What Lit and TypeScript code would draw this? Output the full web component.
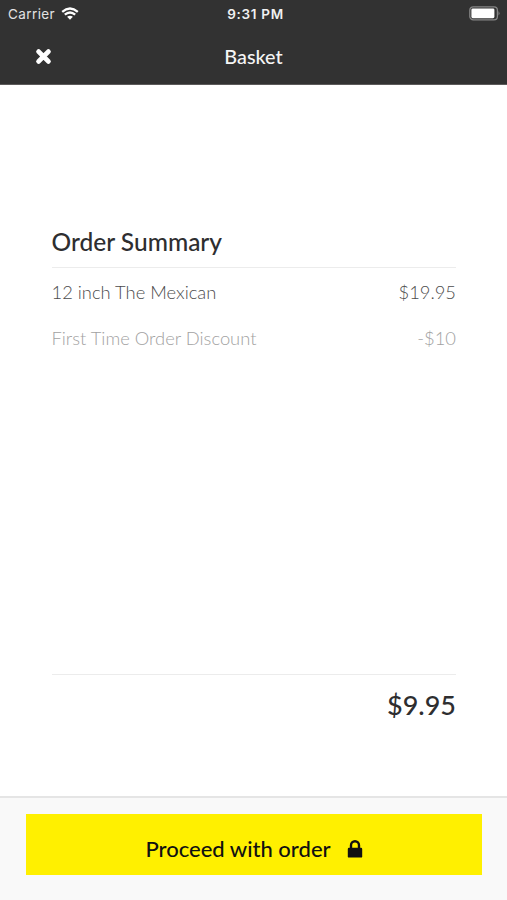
import { LitElement, html, css } from "lit";
import { customElement } from "lit/decorators.js";

@customElement("app-root")
export class AppRoot extends LitElement {
  static styles = css`
    :host { display: flex; flex-direction: column; height: 900px; background: #fff; color: #2e2e30; font-family: Lato, sans-serif; }
    * { box-sizing: border-box; }
    header { height: 85px; background: #323232; color: #fff; flex: none; border-bottom: 1px solid #5c5a5a; }
    .status { height: 28px; display: grid; grid-template-columns: 1fr auto 1fr; align-items: center; padding: 0 7px 0 8px; font: 13.5px/28px Inter, sans-serif; }
    .carrier { display: flex; align-items: center; gap: 6px; letter-spacing: .4px; color: #e2e2e2; }
    .carrier svg { margin-top: -2px; }
    .time { font-weight: 600; font-size: 13.5px; letter-spacing: .7px; color: #f0f0f0; padding-left: 3px; }
    .battery { justify-self: end; display: block; margin-top: -2px; }
    .nav { height: 56px; display: grid; grid-template-columns: 1fr auto 1fr; align-items: center; }
    .close { margin: 1px 0 0 35px; display: block; }
    .title { font-size: 19.8px; font-weight: 500; color: #f5f5f5; margin-top: -1px; }
    main { flex: 1; display: flex; flex-direction: column; padding: 143px 51px 0 51.5px; }
    h1 { margin: 0; font-size: 24.5px; line-height: 28px; height: 40px; font-weight: 500; border-bottom: 1px solid #ececec; }
    .row { display: flex; justify-content: space-between; font-size: 18.35px; font-weight: 300; line-height: 48px; height: 46px; color: #4c4c4c; }
    .discount { color: #a2a2a2; line-height: 49px; }
    .total { margin-top: auto; height: 122px; border-top: 1px solid #ececec; text-align: right; font-size: 27px; line-height: 59px; font-weight: 500; }
    footer { height: 104px; flex: none; background: #f9f9f9; border-top: 2px solid #e5e5e5; padding: 16px 25.5px; }
    button { width: 100%; height: 61px; border: 0; padding: 7px 0 0 1px; background: #fff000; color: #111; font: 500 22px Lato, sans-serif; display: flex; align-items: center; justify-content: center; gap: 16px; }
    button svg { margin-top: 2px; }
  `;
  render() {
    return html`
      <header>
        <div class="status"><span class="carrier">Carrier
          <svg width="18" height="13" viewBox="0 0 18 13" fill="none" stroke="#fff" stroke-width="2.3"><path d="M1.2 4.8Q9-1.8 16.8 4.8M3.8 7.7Q9 3.3 14.2 7.7"/><path d="M6.1 9.8Q9 7.6 11.9 9.8L9 12.8Z" fill="#fff" stroke="none"/></svg></span>
          <span class="time">9:31 PM</span>
          <svg class="battery" width="31" height="15" viewBox="0 0 31 15"><rect x=".8" y=".8" width="27.6" height="13" rx="3.4" fill="none" stroke="#858585" stroke-width="1.3"/><rect x="2.4" y="2.4" width="23" height="9.8" rx="1.4" fill="#fff"/><path d="M29.5 5q2 2.3 0 4.6z" fill="#858585"/></svg>
        </div>
        <div class="nav"><svg class="close" width="17" height="17" viewBox="0 0 16 16"><path d="M3.4 3.4L12.6 12.6M12.6 3.4L3.4 12.6" stroke="#fff" stroke-width="4.6" stroke-linecap="round"/></svg><span class="title">Basket</span></div>
      </header>
      <main>
        <h1>Order Summary</h1>
        <div class="row"><span>12 inch The Mexican</span><span>$19.95</span></div>
        <div class="row discount"><span>First Time Order Discount</span><span>-$10</span></div>
        <div class="total">$9.95</div>
      </main>
      <footer><button><span>Proceed with order</span><svg width="16" height="18" viewBox="0 0 16 18"><path d="M4 8V5.2a4 4 0 0 1 8 0V8" fill="none" stroke="#111" stroke-width="2.4"/><rect x=".8" y="7.8" width="14.4" height="9.8" rx="1.2" fill="#111"/></svg></button></footer>`;
  }
}
